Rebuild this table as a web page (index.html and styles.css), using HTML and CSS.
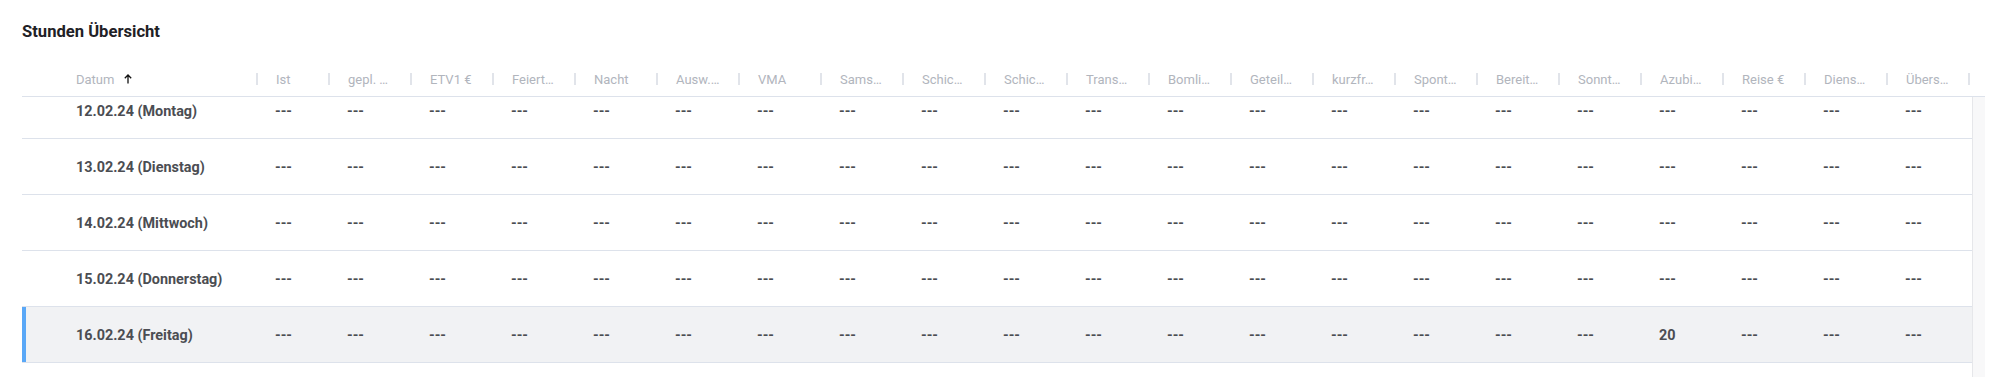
FILE: index.html
```html
<!DOCTYPE html>
<html lang="de">
<head>
<meta charset="utf-8">
<title>Stunden Übersicht</title>
<link rel="stylesheet" href="styles.css">
</head>
<body>
<div class="page">
  <h1 class="title">Stunden Übersicht</h1>
  <div class="grid">
    <div class="header">
      <div class="hcell c-date"><span class="hlabel">Datum</span><svg class="sort" width="8" height="10" viewBox="0 0 8 10"><path d="M4 9.5V1M0.8 4.2L4 1l3.2 3.2" fill="none" stroke="#111" stroke-width="1.3"/></svg><i class="sep"></i></div>
      <div class="hcell c-ist"><span class="hlabel">Ist</span><i class="sep"></i></div>
      <div class="hcell"><span class="hlabel">gepl. …</span><i class="sep"></i></div>
      <div class="hcell"><span class="hlabel">ETV1 €</span><i class="sep"></i></div>
      <div class="hcell"><span class="hlabel">Feiert…</span><i class="sep"></i></div>
      <div class="hcell"><span class="hlabel">Nacht</span><i class="sep"></i></div>
      <div class="hcell"><span class="hlabel">Ausw.…</span><i class="sep"></i></div>
      <div class="hcell"><span class="hlabel">VMA</span><i class="sep"></i></div>
      <div class="hcell"><span class="hlabel">Sams…</span><i class="sep"></i></div>
      <div class="hcell"><span class="hlabel">Schic…</span><i class="sep"></i></div>
      <div class="hcell"><span class="hlabel">Schic…</span><i class="sep"></i></div>
      <div class="hcell"><span class="hlabel">Trans…</span><i class="sep"></i></div>
      <div class="hcell"><span class="hlabel">Bomli…</span><i class="sep"></i></div>
      <div class="hcell"><span class="hlabel">Geteil…</span><i class="sep"></i></div>
      <div class="hcell"><span class="hlabel">kurzfr…</span><i class="sep"></i></div>
      <div class="hcell"><span class="hlabel">Spont…</span><i class="sep"></i></div>
      <div class="hcell"><span class="hlabel">Bereit…</span><i class="sep"></i></div>
      <div class="hcell"><span class="hlabel">Sonnt…</span><i class="sep"></i></div>
      <div class="hcell"><span class="hlabel">Azubi…</span><i class="sep"></i></div>
      <div class="hcell"><span class="hlabel">Reise €</span><i class="sep"></i></div>
      <div class="hcell"><span class="hlabel">Diens…</span><i class="sep"></i></div>
      <div class="hcell"><span class="hlabel">Übers…</span><i class="sep"></i></div>
    </div>
    <div class="body">
      <div class="viewport">
        <div class="rows">
          <div class="row">
            <div class="cell c-date">12.02.24 (Montag)</div>
            <div class="cell c-ist">---</div>
            <div class="cell">---</div><div class="cell">---</div><div class="cell">---</div><div class="cell">---</div><div class="cell">---</div><div class="cell">---</div><div class="cell">---</div><div class="cell">---</div><div class="cell">---</div><div class="cell">---</div><div class="cell">---</div><div class="cell">---</div><div class="cell">---</div><div class="cell">---</div><div class="cell">---</div><div class="cell">---</div><div class="cell">---</div><div class="cell">---</div><div class="cell">---</div><div class="cell">---</div>
          </div>
          <div class="row">
            <div class="cell c-date">13.02.24 (Dienstag)</div>
            <div class="cell c-ist">---</div>
            <div class="cell">---</div><div class="cell">---</div><div class="cell">---</div><div class="cell">---</div><div class="cell">---</div><div class="cell">---</div><div class="cell">---</div><div class="cell">---</div><div class="cell">---</div><div class="cell">---</div><div class="cell">---</div><div class="cell">---</div><div class="cell">---</div><div class="cell">---</div><div class="cell">---</div><div class="cell">---</div><div class="cell">---</div><div class="cell">---</div><div class="cell">---</div><div class="cell">---</div>
          </div>
          <div class="row">
            <div class="cell c-date">14.02.24 (Mittwoch)</div>
            <div class="cell c-ist">---</div>
            <div class="cell">---</div><div class="cell">---</div><div class="cell">---</div><div class="cell">---</div><div class="cell">---</div><div class="cell">---</div><div class="cell">---</div><div class="cell">---</div><div class="cell">---</div><div class="cell">---</div><div class="cell">---</div><div class="cell">---</div><div class="cell">---</div><div class="cell">---</div><div class="cell">---</div><div class="cell">---</div><div class="cell">---</div><div class="cell">---</div><div class="cell">---</div><div class="cell">---</div>
          </div>
          <div class="row">
            <div class="cell c-date">15.02.24 (Donnerstag)</div>
            <div class="cell c-ist">---</div>
            <div class="cell">---</div><div class="cell">---</div><div class="cell">---</div><div class="cell">---</div><div class="cell">---</div><div class="cell">---</div><div class="cell">---</div><div class="cell">---</div><div class="cell">---</div><div class="cell">---</div><div class="cell">---</div><div class="cell">---</div><div class="cell">---</div><div class="cell">---</div><div class="cell">---</div><div class="cell">---</div><div class="cell">---</div><div class="cell">---</div><div class="cell">---</div><div class="cell">---</div>
          </div>
          <div class="row selected">
            <div class="cell c-date">16.02.24 (Freitag)</div>
            <div class="cell c-ist">---</div>
            <div class="cell">---</div><div class="cell">---</div><div class="cell">---</div><div class="cell">---</div><div class="cell">---</div><div class="cell">---</div><div class="cell">---</div><div class="cell">---</div><div class="cell">---</div><div class="cell">---</div><div class="cell">---</div><div class="cell">---</div><div class="cell">---</div><div class="cell">---</div><div class="cell">---</div><div class="cell">---</div><div class="cell">20</div><div class="cell">---</div><div class="cell">---</div><div class="cell">---</div>
          </div>
        </div>
      </div>
      <div class="vscroll"></div>
    </div>
  </div>
</div>
</body>
</html>
```
FILE: styles.css
```css
* { box-sizing: border-box; }
html, body { margin: 0; padding: 0; background: #ffffff; }
body {
  font-family: Roboto, "Liberation Sans", Arial, sans-serif;
  height: 377px;
  overflow: hidden;
}
.page {
  padding: 22px 14px 0 22px;
}
.title {
  margin: 0 0 20px 0;
  font-size: 16.6px;
  line-height: 20px;
  font-weight: 700;
  color: #1f2126;
}
.grid {
  display: flex;
  flex-direction: column;
}
.header {
  display: flex;
  height: 35px;
  border-bottom: 1px solid #dde2eb;
}
.hcell {
  position: relative;
  flex: 0 0 82px;
  display: flex;
  align-items: center;
  padding-left: 18px;
  font-size: 13px;
  color: #b1b5bd;
  white-space: nowrap;
  overflow: hidden;
}
.hcell.c-date { flex-basis: 236px; padding-left: 54px; }
.hcell.c-ist { flex-basis: 72px; }
.hlabel { display: block; }
.sort { margin-left: 10px; margin-top: -1px; }
.sep {
  position: absolute;
  right: 0;
  top: 11px;
  width: 2px;
  height: 12px;
  background: #e1e4ea;
}
.body {
  display: flex;
  height: 280px;
}
.viewport {
  flex: 1 1 auto;
  overflow: hidden;
}
.rows { margin-top: -14px; }
.row {
  display: flex;
  height: 56px;
  border-bottom: 1px solid #dde2eb;
}
.row.selected {
  background: #f1f2f4;
  box-shadow: inset 4px 0 0 #5aa8f7;
}
.cell {
  flex: 0 0 82px;
  display: flex;
  align-items: center;
  padding-left: 17px;
  padding-top: 2px;
  font-size: 14.4px;
  font-weight: 700;
  color: #4b4d52;
  white-space: nowrap;
}
.cell.c-date { flex-basis: 236px; padding-left: 54px; }
.cell.c-ist { flex-basis: 72px; }
.vscroll {
  flex: 0 0 13px;
  background: #f8f8f9;
  border-left: 1px solid #e6e7ea;
}
```
